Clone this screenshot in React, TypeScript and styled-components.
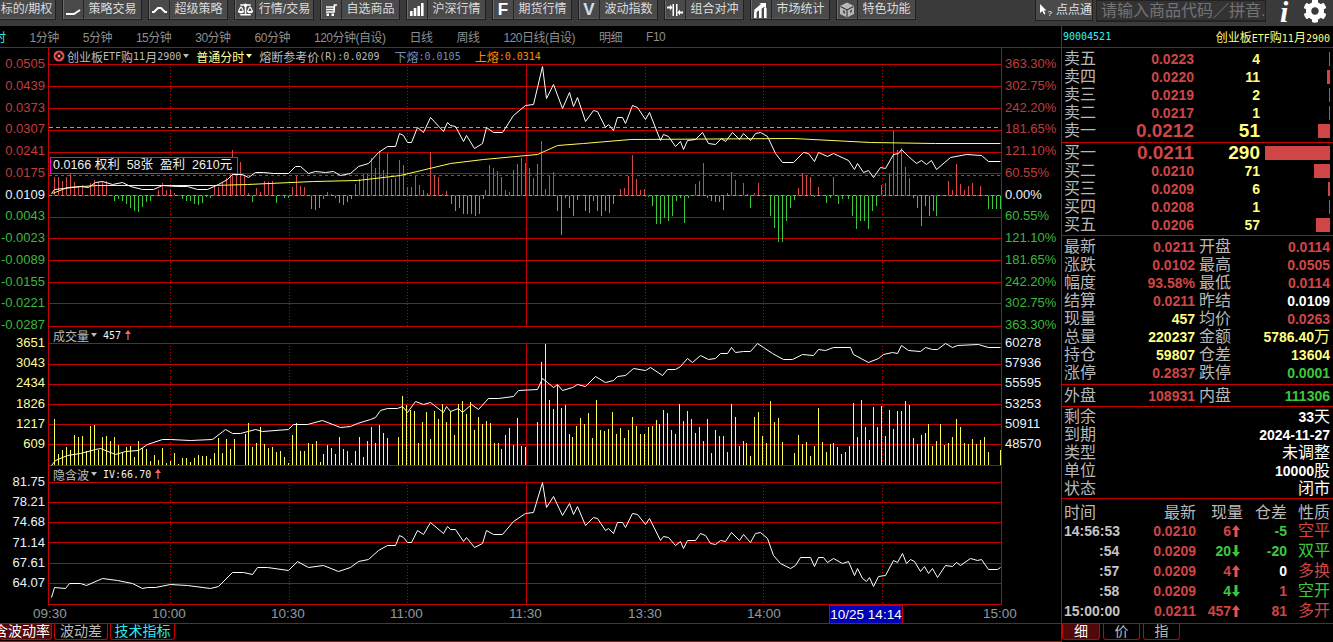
import React from "react";
import styled, { createGlobalStyle } from "styled-components";
import { FaCog, FaBalanceScale } from "react-icons/fa";

const RED = "#c80000";
const PRICE = "#d04545";
const GREEN = "#3cc83c";
const YEL = "#ffff80";
const CJK = `"Liberation Sans", "Noto Sans CJK SC", sans-serif`;

const Global = createGlobalStyle`
  html, body { margin: 0; padding: 0; background: #000; overflow: hidden; }
  body { font-family: ${CJK}; }
  #root { width: 1333px; height: 642px; overflow: hidden; }
`;

const Page = styled.div`
  width: 1333px; height: 642px; background: #000; display: flex; flex-direction: column; overflow: hidden;
`;
const Toolbar = styled.div`
  height: 25px; flex: none; background: #3a3a3a; border-bottom: 1px solid ${RED};
  display: flex; align-items: flex-start; overflow: hidden;
`;
const BtnGroup = styled.div`
  display: flex; gap: 6px; margin-left: -24px; width: 975px; flex: none;
`;
const Btn = styled.div`
  width: 80px; height: 20px; flex: none; box-sizing: border-box; background: #4a4a4a;
  border: 1px solid #202020; border-top: none; box-shadow: inset 1px 0 #6a6a6a, inset 0 -1px #5c5c5c;
  display: flex; color: #dcdcdc; font-size: 12px; line-height: 19px;
`;
const BtnIcon = styled.div`
  width: 20px; flex: none; border-right: 1px solid #262626; display: flex; align-items: center; justify-content: center;
  color: #fff; font-weight: 700; font-size: 17px;
`;
const BtnLabel = styled.div`
  flex: 1; text-align: center; white-space: nowrap;
`;
const Tools = styled.div`
  display: flex; align-items: flex-start; margin-left: 84px; flex: none;
`;
const PointBtn = styled.div`
  width: 58px; height: 21px; box-sizing: border-box; background: #4a4a4a; border: 1px solid #202020; border-top: none;
  color: #e0e0e0; font-size: 12px; line-height: 20px; display: flex; align-items: center; gap: 3px; padding-left: 3px;
`;
const SearchBox = styled.div`
  width: 170px; height: 22px; margin-left: 3px; box-sizing: border-box; background: #333; border: 1px solid #222;
  border-bottom: 2px solid #222; color: #747474; font-size: 16px; line-height: 20px; padding-left: 4px; overflow: hidden; white-space: nowrap;
`;
const InfoGlyph = styled.div`
  font-family: "Liberation Serif", serif; font-style: italic; font-weight: 700; color: #fff; font-size: 30px; line-height: 23px;
  margin-left: 14px; width: 23px;
`;
const Gear = styled(FaCog)`
  color: #fff; width: 24px; height: 24px; margin: -1px 0 0 0;
`;

const Body = styled.div`
  flex: 1; display: flex; min-height: 0;
`;
const ChartCol = styled.div`
  width: 1061px; flex: none; border-right: 1px solid ${RED}; display: flex; flex-direction: column;
`;
const TabRow = styled.div`
  height: 21px; flex: none; border-bottom: 1px solid ${RED}; display: flex; gap: 24px; align-items: center;
  font-size: 12px; letter-spacing: -0.5px; color: #8e8e8e; white-space: nowrap; overflow: hidden;
`;
const TabItem = styled.span<{ $active?: boolean }>`
  color: ${(p) => (p.$active ? "#30e0e0" : "#8e8e8e")};
  margin-left: ${(p) => (p.$active ? "-6px" : "0")};
`;
const Pane = styled.div`
  display: grid; grid-template-columns: 48px 954px 59px;
`;
const PaneHead = styled.div`
  grid-column: 2; height: 16px; display: flex; align-items: center; padding-left: 4px; box-sizing: border-box;
  border-left: 1px solid ${RED}; border-right: 1px solid ${RED}; font-size: 12px; color: #bcbcbc; white-space: nowrap;
`;
const HeadSpacer = styled.div<{ $col: number }>`
  grid-column: ${(p) => p.$col}; grid-row: 1;
`;
const Mono = styled.span<{ $c?: string; $ml?: number }>`
  font-family: "DejaVu Sans Mono", monospace; font-size: 10px; color: ${(p) => p.$c || "inherit"}; margin-left: ${(p) => p.$ml || 0}px;
`;
const Tx = styled.span<{ $c?: string; $ml?: number }>`
  color: ${(p) => p.$c || "inherit"}; margin-left: ${(p) => p.$ml || 0}px;
`;
const Caret = styled.i<{ $c?: string }>`
  display: inline-block; margin-left: 2px; width: 0; height: 0; border-left: 3px solid transparent; border-right: 3px solid transparent;
  border-top: 4px solid ${(p) => p.$c || "#bcbcbc"};
`;
const AxisL = styled.div<{ $h: number }>`
  grid-column: 1; grid-row: 2; height: ${(p) => p.$h + 16}px; margin: -8px 0; display: flex; flex-direction: column; justify-content: space-between;
  align-items: flex-end; padding-right: 3px; font-size: 13px; line-height: 16px;
`;
const AxisR = styled(AxisL)`
  grid-column: 3; align-items: flex-start; padding: 0 0 0 3px;
`;
const Tick = styled.span<{ $c: string }>`
  color: ${(p) => p.$c};
`;
const PlotCell = styled.div`
  grid-column: 2; grid-row: 2; position: relative;
`;
const PlotSvg = styled.svg`
  display: block;
`;
const Tip = styled.div`
  position: absolute; left: 2px; top: 93px; width: 188px; height: 17px; box-sizing: border-box; border: 1px solid #f000d0; background: #000;
  color: #f0f0f0; font-size: 12.5px; line-height: 14px; padding-left: 2px; white-space: pre;
`;
const TimeRow = styled.div`
  height: 18px; flex: none; border-bottom: 1px solid ${RED}; padding-left: 33px; display: flex; gap: 87px; align-items: center;
  font-size: 13.5px; color: #8e9aa0; line-height: 18px;
`;
const TimeLabel = styled.span`
  width: 32px; text-align: center; flex: none;
`;
const CrossTime = styled.span`
  width: 74px; height: 18px; flex: none; margin: 0 -7px 0 -37px; box-sizing: border-box; background: #0000b4; border: 1px solid ${RED}; border-bottom: none;
  color: #fff; text-align: center; line-height: 18px; white-space: nowrap;
`;
const BottomTabs = styled.div`
  flex: 1; display: flex; align-items: flex-start; gap: 2px; overflow: hidden; border-bottom: 1px solid ${RED}; margin-bottom: 0;
`;
const BTab = styled.div<{ $active?: boolean; $w: number; $c?: string; $ml?: number }>`
  width: ${(p) => p.$w}px; margin-left: ${(p) => p.$ml || 0}px; flex: none; height: 16px; box-sizing: border-box; border: 1px solid ${RED}; border-top: none; border-radius: 0 0 3px 3px;
  background: ${(p) => (p.$active ? "#500808" : "#000")}; color: ${(p) => p.$c || "#bcbcbc"}; font-size: 14px; line-height: 15px; text-align: center; white-space: nowrap;
`;

const Side = styled.div`
  flex: 1; display: flex; flex-direction: column; color: #b8b8b8; overflow: hidden;
`;
const SideHead = styled.div`
  height: 21px; flex: none; border-bottom: 1px solid ${RED}; display: flex; justify-content: space-between; align-items: center;
  padding: 0 3px 0 1px; font-size: 12px; color: ${YEL}; white-space: nowrap;
`;
const Sect = styled.div<{ $pt?: number; $pb?: number; $end?: boolean }>`
  padding: ${(p) => p.$pt || 0}px 3px ${(p) => p.$pb || 0}px 2px; flex: none;
  border-bottom: ${(p) => (p.$end ? "none" : `1px solid ${RED}`)};
`;
const BookRow = styled.div`
  display: grid; grid-template-columns: 32px 98px 66px 70px; height: 18px; align-items: center;
`;
const Lab = styled.span<{ $pl?: number }>`
  font-size: 16px; line-height: 18px; color: #b8b8b8; padding-left: ${(p) => p.$pl || 0}px; white-space: nowrap;
`;
const Num = styled.span<{ $c: string; $big?: boolean }>`
  font-weight: 700; font-size: ${(p) => (p.$big ? "19px" : "14px")}; color: ${(p) => p.$c}; text-align: right; line-height: 18px; white-space: nowrap;
`;
const Depth = styled.i<{ $w: number }>`
  display: block; height: 14px; width: ${(p) => p.$w}px; background: ${PRICE}; justify-self: end;
`;
const StatRow = styled.div`
  display: grid; grid-template-columns: 32px 99px 36px 99px; height: 18px; align-items: center;
`;
const TapeRow = styled.div`
  display: grid; grid-template-columns: 32px 99px 36px 99px; height: 21px; align-items: center;
`;
const InfoRow = styled.div`
  display: flex; justify-content: space-between; height: 18px; align-items: center;
`;
const Unit = styled.span`
  font-size: 16px; font-weight: 400;
`;
const TradeRow = styled.div<{ $h: number }>`
  display: grid; grid-template-columns: 72px 60px 47px 44px 43px; height: ${(p) => p.$h}px; align-items: center;
`;
const TradeHead = styled.span<{ $left?: boolean }>`
  font-size: 16px; color: #b8b8b8; text-align: ${(p) => (p.$left ? "left" : "right")};
`;
const TradeQty = styled.span<{ $c: string }>`
  font-weight: 700; font-size: 14px; color: ${(p) => p.$c}; display: flex; justify-content: flex-end; align-items: center; gap: 1px; padding-right: 3px;
`;
const Nature = styled.span<{ $c: string }>`
  font-size: 16px; color: ${(p) => p.$c}; text-align: right; line-height: 20px;
`;
const TimeCell = styled.span`
  font-weight: 700; font-size: 14px; color: #c4c4c4; padding-left: 0; text-align: left; white-space: pre;
`;
const SideTabs = styled.div`
  display: flex; gap: 3px; padding-left: 0; flex: 1; border-top: 1px solid ${RED};
`;
const STab = styled(BTab)`
  line-height: 15px;
`;

/* ---------- data ---------- */
type P = [number, number];
const pricePts: P[] = [[51,193],[54,189],[63,188],[72,187],[80,186],[88,187],[95,182],[102,181],[112,184],[122,182],[130,186],[142,189],[153,189],[162,185],[177,186],[187,186],[197,189],[207,189],[218,184],[227,179],[232,174],[242,174],[248,177],[255,172],[263,172],[273,173],[288,173],[295,166],[300,166],[308,173],[315,171],[325,172],[333,171],[340,175],[350,173],[358,166],[368,163],[378,152],[387,146],[395,146],[399,133],[403,135],[407,142],[411,142],[417,127],[423,132],[430,117],[443,131],[447,122],[450,125],[455,126],[463,141],[466,135],[474,148],[482,143],[486,127],[493,132],[502,132],[513,115],[525,105],[533,104],[542,66],[546,98],[553,84],[562,108],[569,92],[573,106],[577,97],[585,121],[593,110],[597,111],[605,127],[608,124],[613,130],[617,117],[622,117],[625,123],[632,105],[637,107],[645,119],[649,112],[660,140],[663,134],[668,136],[675,146],[680,141],[683,149],[687,140],[695,139],[702,132],[708,143],[715,144],[721,138],[725,141],[732,132],[739,139],[743,133],[750,140],[755,133],[760,132],[767,136],[775,153],[782,162],[793,162],[803,152],[808,153],[814,161],[818,152],[827,156],[833,153],[848,160],[854,169],[857,163],[863,172],[868,170],[873,177],[880,167],[885,168],[893,154],[898,153],[901,149],[908,156],[916,163],[921,160],[926,164],[931,160],[936,169],[950,157],[966,154],[981,155],[988,161],[1000,161]];
const avgPts: P[] = [[52,193],[67,187],[97,185],[213,185],[247,184],[313,181],[357,180],[400,175],[450,163],[483,159],[537,154],[557,145],[583,143],[630,139],[793,138],[870,142],[935,143],[1000,143]];
const volLine: P[] = [[51,465],[55,460],[67,455],[80,453],[95,449],[100,448],[115,454],[125,451],[138,450],[147,444],[162,439],[170,439],[190,440],[212,439],[225,429],[232,433],[240,433],[255,429],[262,431],[288,429],[293,424],[307,424],[322,420],[340,427],[350,426],[357,423],[370,419],[375,417],[380,410],[387,408],[397,408],[402,406],[407,412],[415,401],[423,404],[430,402],[443,412],[446,406],[450,411],[458,408],[462,412],[471,404],[478,409],[488,398],[498,398],[513,396],[518,390],[537,389],[542,378],[547,382],[553,387],[557,384],[562,390],[572,387],[577,384],[585,386],[595,376],[605,382],[613,380],[617,376],[625,375],[633,368],[645,370],[650,367],[662,375],[667,369],[675,369],[680,366],[687,358],[692,362],[700,355],[708,359],[715,358],[720,353],[727,353],[731,347],[735,352],[743,351],[750,351],[757,343],[763,347],[772,353],[783,359],[792,359],[802,354],[813,355],[818,349],[825,350],[833,347],[850,347],[853,354],[868,362],[878,358],[883,354],[892,352],[897,353],[901,345],[908,350],[920,351],[925,347],[932,349],[937,349],[945,343],[952,347],[957,345],[978,344],[988,347],[1000,347]];
const ivHead: P[] = [[51,597],[54,587],[65,588],[69,583],[80,583],[86,585],[102,578],[117,580],[132,583],[142,588],[147,587],[155,587],[170,584],[187,585],[210,588],[218,586],[232,572],[243,572],[252,574],[257,567],[267,567],[288,570],[297,561],[308,567],[323,565],[338,571]];
const ivTail: P[] = [[700,533],[705,535],[710,543],[715,544],[720,540],[725,541],[731,532],[739,540],[743,534],[750,542],[755,533],[760,532],[767,538],[773,555],[780,563],[790,568],[795,565],[800,557],[810,557],[814,566],[818,557],[823,557],[827,562],[833,558],[842,563],[848,561],[854,575],[857,568],[862,578],[866,581],[869,577],[873,586],[878,576],[885,575],[893,560],[897,562],[902,553],[906,563],[910,559],[914,561],[920,571],[924,566],[928,573],[932,568],[937,577],[945,565],[952,566],[956,562],[960,565],[970,558],[977,560],[981,559],[988,569],[997,569],[1000,567]];
const ivMid: P[] = pricePts.filter(([x]) => x >= 345 && x < 700).map(([x, y]) => [x, Math.round(482 + 0.79 * (y - 66))] as P);
const ivPts = [...ivHead, ...ivMid, ...ivTail];

const diff1 = "163:18,175:18,187:14,199:18,211:30,223:13,235:8,247:10,271:12,283:15,295:13,307:13,319:14,343:-5,355:-3,367:-5,379:-8,391:-12,403:-15,415:-16,427:-11,439:-6,451:-5,475:5,487:12,499:5,511:6,523:2,547:-3,559:-5,571:-5,583:-8,595:-9,607:-7,619:-1,631:-2,643:9,655:8,667:12,679:17,691:25,697:45,709:30,721:33,733:20,745:2,757:-6,769:7,781:3,793:14,805:13,817:14,829:-7,853:-2,865:-2,877:8,889:20,901:9,913:8,933:-13,945:-14,957:-12,969:-3,981:3,993:1,1007:-2,1019:-7,1031:-9,1043:-6,1055:-3,1067:11,1079:16,1091:21,1103:21,1115:37,1127:27,1139:44,1151:25,1163:42,1175:16,1187:17,1199:35,1211:30,1223:8,1235:8,1247:19,1259:10,1271:5,1283:2,1292:43,1304:20,1316:18,1328:1,1340:4";
const diff2 = "3:-8,15:-15,27:-12,39:-18,51:-18,63:-18,75:-20,87:-18,99:-3,107:5,119:30,131:27,143:24,155:18,167:5,179:3,191:25,203:31,215:37,227:32,239:27,251:17,263:31,275:54,287:6,299:20,311:23,323:-15,335:-39,347:-2,359:-12,371:-20,383:-4,407:-15,419:-17,431:-5,443:-15,455:-20,467:-15,479:-17,491:-8,511:6,523:7,535:19,547:40,559:16,571:5,583:6,595:-1,607:-10,619:-28,631:-28,643:-22,655:-25,667:-20,679:-5,691:-2,703:-27,715:-2,737:11,749:14,761:32,773:-2,785:-5,797:-6,809:-6,821:-14,833:2,845:23,857:15,881:12,893:1,901:-12,913:2,925:12,961:-20,973:-32,985:-46,997:-46,1009:-25,1021:-12,1033:-4,1045:7,1057:22,1069:20,1081:18,1093:-1,1105:8,1129:-7,1141:-2,1150:18,1165:-8,1177:-3,1195:-3,1207:-20,1219:-33,1231:-25,1243:-25,1255:-33,1267:-15,1279:-10,1295:10,1307:12,1319:21";
const diff3 = "7:12,19:21,31:64,43:45,55:47,67:28,79:17,91:-2,103:-12,115:-30,127:-10,139:-20,151:-15,161:-20,197:14,209:5,221:31,233:11,245:5,257:9,269:12,293:9,317:-13,329:-13,341:-13,353:-13";
const vol1 = "163:46,175:11,187:15,199:18,211:15,223:30,235:28,247:29,259:14,271:39,283:40,295:15,307:28,319:29,331:24,343:28,355:20,367:12,379:18,391:19,403:8,415:24,427:17,439:16,451:4,463:10,475:5,487:17,499:2,511:4,523:12,535:1,547:7,559:7,571:3,583:7,595:10,607:9,619:9,631:6,643:12,655:27,667:12,679:26,691:16,703:26,735:31,746:42,758:18,770:22,782:38,794:21,806:17,818:18,830:13,842:14,854:8,866:2,878:30,890:42,902:14,914:14,926:22,938:21,950:24,962:3,970:11,982:20,994:17,1006:11,1018:28,1030:16,1042:14";
const vol2 = "4:2,16:14,28:28,40:8,52:24,64:38,76:22,88:40,100:32,112:27,146:28,158:69,170:60,182:55,194:54,206:22,218:43,230:53,242:26,254:54,266:46,278:61,290:43,302:54,314:30,326:61,338:64,350:51,362:63,374:35,386:48,398:41,410:44,422:42,434:22,446:22,454:16,466:30,478:37,490:20,502:47,514:19,526:18,562:43,574:103,586:121,598:65,610:56,622:80,634:57,646:60,658:31,668:28,680:39,692:47,704:41,716:52,728:27,740:65,752:35,764:34,776:36,788:53,800:31,812:37,824:27,836:35,848:48,860:39,872:31,884:31,896:38,908:39,920:45,928:41,940:55,952:52,964:35,976:31,988:61,1000:44,1012:54,1024:46,1036:32,1048:38";
const vol3 = "10:24,22:46,34:12,46:35,58:29,70:29,82:13,94:61,106:48,118:19,130:24,139:22,151:9,163:48,175:53,187:29,199:22,211:64,223:43,235:47,247:23,283:12,295:30,307:21,319:23,331:9,343:19,355:57,367:23,379:13,391:21,400:22,412:18,424:11,436:13,448:19,460:62,472:28,484:65,496:38,508:25,520:58,532:38,544:59,556:29,568:55,580:36,592:54,604:54,616:64,628:60,640:27,652:21,664:30,676:32,685:41,697:19,709:24,721:41,733:20,745:22,757:28,769:46,781:38,793:22,805:21,817:26,829:21,841:25,853:28,865:13,901:15";
const parse = (s: string, off: number): P[] =>
  s.split(",").map((t) => { const [a, b] = t.split(":").map(Number); return [Math.floor(a / 3) + off, b] as P; });
const diffBars = [...parse(diff1, 0), ...parse(diff2, 450), ...parse(diff3, 883)];
const volBars = [...parse(vol1, 0).filter(([x]) => x < 350), ...parse(vol2, 350).filter(([x]) => x < 700), ...parse(vol3, 700)];

const VERT = [170, 289, 407, 645, 763, 882];
const pts = (a: P[]) => a.map(([x, y]) => `${x + 0.5},${y + 0.5}`).join(" ");

function Grid({ ys, top, bottom }: { ys: number[]; top: number; bottom: number }) {
  return (
    <g shapeRendering="crispEdges">
      {ys.map((y) => <rect key={y} x={48} y={y} width={954} height={1} fill={RED} />)}
      {VERT.map((x) => <line key={x} x1={x + 0.5} x2={x + 0.5} y1={top} y2={bottom} stroke={RED} strokeDasharray="1 2" />)}
      <rect x={526} y={top} width={1} height={bottom - top} fill={RED} />
      <rect x={48} y={top} width={1} height={bottom - top + 1} fill={RED} />
      <rect x={1001} y={top} width={1} height={bottom - top + 1} fill={RED} />
    </g>
  );
}

function Plot({ top, h, children }: { top: number; h: number; children: React.ReactNode }) {
  return <PlotSvg width={954} height={h} viewBox={`48 ${top} 954 ${h}`}>{children}</PlotSvg>;
}

const UpArrow = ({ c = "#ff6464", s = 10 }: { c?: string; s?: number }) => (
  <svg width={6} height={s} viewBox="0 0 6 10" style={{ marginLeft: 4 }}><path d="M3 0 L6 4 H3.6 V10 H2.4 V4 H0 Z" fill={c} /></svg>
);
const BoldArrow = ({ dir, c }: { dir: "u" | "d"; c: string }) => (
  <svg width={8} height={12} viewBox="0 0 8 12"><path d={dir === "u" ? "M4 0 L8 5 H5.5 V12 H2.5 V5 H0 Z" : "M4 12 L8 7 H5.5 V0 H2.5 V7 H0 Z"} fill={c} /></svg>
);

const icons: Record<string, React.ReactNode> = {
  line: <svg width="16" height="12" viewBox="0 0 16 12"><path d="M1 10 H9 L15 6" fill="none" stroke="#fff" strokeWidth="2" /></svg>,
  arch: <svg width="17" height="12" viewBox="0 0 17 12"><path d="M1 8 H3 L7 4 H10 L14 8 H16" fill="none" stroke="#fff" strokeWidth="2" /></svg>,
  scale: <FaBalanceScale size={15} color="#fff" />,
  cart: <svg width="14" height="14" viewBox="0 0 14 14"><path d="M13 2 H10.5 L10 9 H2 M2 4 H10 M2 6.5 H10" fill="none" stroke="#fff" strokeWidth="1.6" /><rect x="2.5" y="10.5" width="2.5" height="2.5" fill="#fff" /><rect x="7.5" y="10.5" width="2.5" height="2.5" fill="#fff" /></svg>,
  bars: <svg width="14" height="13" viewBox="0 0 14 13" fill="#fff"><rect x="0" y="8" width="2.6" height="5" /><rect x="3.7" y="5" width="2.6" height="8" /><rect x="7.4" y="3" width="2.6" height="10" /><rect x="11" y="0" width="2.6" height="13" /></svg>,
  hedge: <svg width="16" height="14" viewBox="0 0 16 14" fill="#fff"><rect x="5.5" y="1" width="1.5" height="12" /><rect x="9" y="1" width="1.5" height="12" /><path d="M0 3.5 H3 V1.5 L5.5 4.5 L3 7.5 V5.5 H0 Z" /><path d="M16 8.5 H13 V6.5 L10.5 9.5 L13 12.5 V10.5 H16 Z" /></svg>,
  stat: <svg width="16" height="16" viewBox="0 0 16 16" fill="#fff"><rect x="1" y="10" width="2.6" height="6" /><rect x="6" y="6" width="2.6" height="10" /><rect x="11" y="6" width="2.6" height="10" /><path d="M1 8 L8 2 L6 1 H13 V7 L11 5 L2 11 Z" /></svg>,
  cube: <svg width="16" height="16" viewBox="0 0 16 16"><path d="M8 0.5 L15 4 V12 L8 15.5 L1 12 V4 Z" fill="#b8b8b8" /><path d="M1.5 4.5 L8 8 L14.5 4.5 M8 8 V15" fill="none" stroke="#333" strokeWidth="1.1" /><path d="M4 8 L6 9 V12 L4 11 Z M11 8.5 L13 7.5 V10 L11 11 Z" fill="#555" /></svg>,
};

const buttons: [React.ReactNode, string][] = [
  ["", "标的/期权"], [icons.line, "策略交易"], [icons.arch, "超级策略"], [icons.scale, "行情/交易"], [icons.cart, "自选商品"],
  [icons.bars, "沪深行情"], ["F", "期货行情"], [<span style={{ color: "#cfe0f0" }}>V</span>, "波动指数"], [icons.hedge, "组合对冲"], [icons.stat, "市场统计"], [icons.cube, "特色功能"],
];

const W = "#e8f4ff", R = "#c43c3c", G = "#3cb83c", Y = "#ffff99";
const sell = [["卖五","0.0223","4",1],["卖四","0.0220","11",3],["卖三","0.0219","2",1],["卖二","0.0217","1",1],["卖一","0.0212","51",12]] as const;
const buy = [["买一","0.0211","290",65],["买二","0.0210","71",16],["买三","0.0209","6",2],["买四","0.0208","1",1],["买五","0.0206","57",14]] as const;
const stats: [string, string, string, string, string, string, string?][] = [
  ["最新","0.0211",PRICE,"开盘","0.0114",PRICE],["涨跌","0.0102",PRICE,"最高","0.0505",PRICE],["幅度","93.58%",PRICE,"最低","0.0114",PRICE],
  ["结算","0.0211",PRICE,"昨结","0.0109","#fff"],["现量","457",YEL,"均价","0.0263",PRICE],["总量","220237",YEL,"金额","5786.40",YEL,"万"],
  ["持仓","59807",YEL,"仓差","13604",YEL],["涨停","0.2837",PRICE,"跌停","0.0001",GREEN],
];
const trades = [
  ["14:56:53","0.0210","6","u","-5",GREEN,"空平",PRICE],["         :54","0.0209","20","d","-20",GREEN,"双平",GREEN],
  ["         :57","0.0209","4","u","0","#fff","多换",PRICE],["         :58","0.0209","4","d","1",PRICE,"空开",GREEN],
  ["15:00:00","0.0211","457","u","81",PRICE,"多开",PRICE],
] as const;

export default function App() {
  return (
    <Page>
      <Global />
      <Toolbar>
        <BtnGroup>
          {buttons.map(([ic, t], i) => (
            <Btn key={i}><BtnIcon>{ic}</BtnIcon><BtnLabel>{t}</BtnLabel></Btn>
          ))}
        </BtnGroup>
        <Tools>
          <PointBtn>
            <svg width="14" height="14" viewBox="0 0 14 14"><path d="M1 1 V10 L3.4 8 L5 11.5 L6.4 10.8 L4.9 7.6 H7.5 Z" fill="#fff" /><text x="8.5" y="13" fontSize="8" fill="#fff">?</text></svg>
            点点通
          </PointBtn>
          <SearchBox>请输入商品代码／拼音.</SearchBox>
          <InfoGlyph>i</InfoGlyph>
          <Gear />
        </Tools>
      </Toolbar>
      <Body>
        <ChartCol>
          <TabRow>
            <TabItem $active>时</TabItem>
            {["1分钟","5分钟","15分钟","30分钟","60分钟","120分钟(自设)","日线","周线","120日线(自设)","明细","F10"].map((t) => <TabItem key={t}>{t}</TabItem>)}
          </TabRow>

          <Pane>
            <HeadSpacer $col={1} />
            <PaneHead>
              <svg width="12" height="12" viewBox="0 0 12 12"><circle cx="6" cy="6" r="5.5" fill="#e05050" /><path d="M6 2 L10 6 L6 10 L2 6 Z" fill="#000" /><path d="M6 4 L8 6 L6 8 L4 6 Z" fill="#ff7070" /></svg>
              <Tx $ml={2}>创业板</Tx><Mono>ETF</Mono>购<Mono>11</Mono>月<Mono>2900</Mono><Caret />
              <Tx $c="#ffff99" $ml={7}>普通分时</Tx><Caret $c="#ffff99" />
              <Tx $ml={7}>熔断参考价</Tx><Mono>(R):0.0209</Mono>
              <Tx $c="#6f8fb8" $ml={15}>下熔</Tx><Mono $c="#6f8fb8">:0.0105</Mono>
              <Tx $c="#ff8a00" $ml={14}>上熔</Tx><Mono $c="#ff8a00">:0.0314</Mono>
            </PaneHead>
            <AxisL $h={261}>
              {["0.0505","0.0439","0.0373","0.0307","0.0241","0.0175"].map((t) => <Tick key={t} $c={R}>{t}</Tick>)}
              <Tick $c={W}>0.0109</Tick>
              {["0.0043","-0.0023","-0.0089","-0.0155","-0.0221","-0.0287"].map((t) => <Tick key={t} $c={G}>{t}</Tick>)}
            </AxisL>
            <PlotCell>
              <Plot top={64} h={263}>
                <Grid ys={[64,86,108,130,152,173,195,217,238,260,282,303,326]} top={64} bottom={326} />
                <g shapeRendering="crispEdges">
                  {diffBars.map(([x, h], i) => (
                    <rect key={i} x={x} y={h > 0 ? 195 - h : 196} width={1} height={Math.abs(h)} fill={h > 0 ? "#d84848" : "#38c838"} />
                  ))}
                  <line x1={49} x2={1001} y1={127.5} y2={127.5} stroke="#ff8a00" strokeDasharray="4 3" />
                  <line x1={49} x2={1001} y1={175.5} y2={175.5} stroke="#f000d0" strokeDasharray="3 3" />
                  <line x1={49} x2={1001} y1={195.5} y2={195.5} stroke="#b09090" strokeDasharray="3 3" />
                </g>
                <polyline points={pts(avgPts)} fill="none" stroke="#ffff50" strokeWidth={1} />
                <polyline points={pts(pricePts)} fill="none" stroke="#fff" strokeWidth={1} />
              </Plot>
              <Tip>0.0166 权利  58张  盈利  2610元</Tip>
            </PlotCell>
            <AxisR $h={261}>
              {["363.30%","302.75%","242.20%","181.65%","121.10%","60.55%"].map((t) => <Tick key={t} $c={R}>{t}</Tick>)}
              <Tick $c={W}>0.00%</Tick>
              {["60.55%","121.10%","181.65%","242.20%","302.75%","363.30%"].map((t) => <Tick key={"g" + t} $c={G}>{t}</Tick>)}
            </AxisR>
          </Pane>

          <Pane>
            <HeadSpacer $col={1} />
            <PaneHead>
              成交量<Caret /><Mono $c="#f0f0f0" $ml={6}>457</Mono><UpArrow />
            </PaneHead>
            <AxisL $h={101}>
              {["3651","3043","2434","1826","1217","609"].map((t) => <Tick key={t} $c={Y}>{t}</Tick>)}
            </AxisL>
            <PlotCell>
              <Plot top={343} h={123}>
                <Grid ys={[343,364,384,404,424,444,465]} top={343} bottom={465} />
                <g shapeRendering="crispEdges">
                  {volBars.map(([x, h], i) => <rect key={i} x={x} y={465 - h} width={1} height={h} fill="#ffff50" />)}
                </g>
                <polyline points={pts(volLine)} fill="none" stroke="#fff" strokeWidth={1} />
              </Plot>
            </PlotCell>
            <AxisR $h={101}>
              {["60278","57936","55595","53253","50911","48570"].map((t) => <Tick key={t} $c={W}>{t}</Tick>)}
            </AxisR>
          </Pane>

          <Pane>
            <HeadSpacer $col={1} />
            <PaneHead>
              隐含波<Caret /><Mono $c="#f0f0f0" $ml={6}>IV:66.70</Mono><UpArrow />
            </PaneHead>
            <AxisL $h={101}>
              {["81.75","78.21","74.68","71.14","67.61","64.07"].map((t) => <Tick key={t} $c={W}>{t}</Tick>)}
            </AxisL>
            <PlotCell>
              <Plot top={482} h={123}>
                <Grid ys={[482,502,522,542,563,583,604]} top={482} bottom={604} />
                <polyline points={pts(ivPts)} fill="none" stroke="#fff" strokeWidth={1} />
              </Plot>
            </PlotCell>
          </Pane>

          <TimeRow>
            {["09:30","10:00","10:30","11:00","11:30","13:30","14:00"].map((t) => <TimeLabel key={t}>{t}</TimeLabel>)}
            <CrossTime>10/25 14:14</CrossTime>
            <TimeLabel>15:00</TimeLabel>
          </TimeRow>
          <BottomTabs>
            <BTab $active $w={52} $c="#fff" $ml={0}><span style={{ marginLeft: -8 }}>含波动率</span></BTab>
            <BTab $w={54}>波动差</BTab>
            <BTab $w={65} $c="#30e8f0">技术指标</BTab>
          </BottomTabs>
        </ChartCol>

        <Side>
          <SideHead>
            <Mono $c="#30f0f8">90004521</Mono>
            <span>创业板<Mono>ETF</Mono>购<Mono>11</Mono>月<Mono>2900</Mono></span>
          </SideHead>
          <Sect $pt={2} $pb={2}>
            {sell.map(([l, p, q, w], i) => (
              <BookRow key={l}><Lab>{l}</Lab><Num $c={PRICE} $big={i === 4}>{p}</Num><Num $c={YEL} $big={i === 4}>{q}</Num><Depth $w={w} /></BookRow>
            ))}
          </Sect>
          <Sect $pt={1} $pb={1}>
            {buy.map(([l, p, q, w], i) => (
              <BookRow key={l}><Lab>{l}</Lab><Num $c={PRICE} $big={i === 0}>{p}</Num><Num $c={YEL} $big={i === 0}>{q}</Num><Depth $w={w} /></BookRow>
            ))}
          </Sect>
          <Sect $pt={2} $pb={2}>
            {stats.map(([a, b, c, d, e, f, u]) => (
              <StatRow key={a}>
                <Lab>{a}</Lab><Num $c={c}>{b}</Num><Lab $pl={4}>{d}</Lab><Num $c={f}>{e}{u && <Unit>{u}</Unit>}</Num>
              </StatRow>
            ))}
          </Sect>
          <Sect>
            <TapeRow><Lab>外盘</Lab><Num $c={PRICE}>108931</Num><Lab $pl={4}>内盘</Lab><Num $c={GREEN}>111306</Num></TapeRow>
          </Sect>
          <Sect $pt={1}>
            <InfoRow><Lab>剩余</Lab><Num $c="#fff">33<Unit>天</Unit></Num></InfoRow>
            <InfoRow><Lab>到期</Lab><Num $c="#fff">2024-11-27</Num></InfoRow>
            <InfoRow><Lab>类型</Lab><Num $c="#fff"><Unit>未调整</Unit></Num></InfoRow>
            <InfoRow><Lab>单位</Lab><Num $c="#fff">10000<Unit>股</Unit></Num></InfoRow>
            <InfoRow><Lab>状态</Lab><Num $c="#fff"><Unit>闭市</Unit></Num></InfoRow>
          </Sect>
          <Sect $end $pb={2}>
            <TradeRow $h={22}>
              <TradeHead $left>时间</TradeHead><TradeHead>最新</TradeHead><TradeHead>现量</TradeHead><TradeHead>仓差</TradeHead><TradeHead>性质</TradeHead>
            </TradeRow>
            {trades.map(([t, p, q, dir, d, dc, n, nc]) => (
              <TradeRow key={t} $h={20}>
                <TimeCell>{t}</TimeCell>
                <Num $c={PRICE}>{p}</Num>
                <TradeQty $c={dir === "u" ? PRICE : GREEN}>{q}<BoldArrow dir={dir} c={dir === "u" ? "#e85050" : GREEN} /></TradeQty>
                <Num $c={dc}>{d}</Num>
                <Nature $c={nc}>{n}</Nature>
              </TradeRow>
            ))}
          </Sect>
          <SideTabs>
            <STab $active $w={38} $c="#fff">细</STab>
            <STab $w={37}>价</STab>
            <STab $w={37}>指</STab>
          </SideTabs>
        </Side>
      </Body>
    </Page>
  );
}
